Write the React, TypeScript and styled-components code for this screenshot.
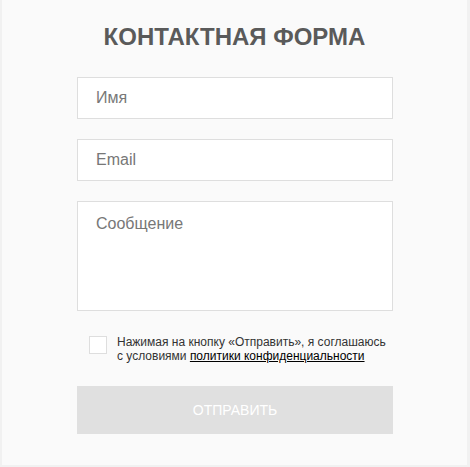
import React from "react";
import styled, { createGlobalStyle } from "styled-components";

const Global = createGlobalStyle`
  html, body { margin: 0; padding: 0; background: #f1f1f1; }
  body { font-family: "Liberation Sans", Arial, sans-serif; }
  * { box-sizing: border-box; }
`;

const Card = styled.div`
  margin: 0 0 0 2px;
  width: 465px;
  height: 465px;
  background: #fafafa;
  display: flex;
  flex-direction: column;
  align-items: center;
  padding-top: 22px;
`;

const Title = styled.h1`
  margin: 0;
  font-family: "Liberation Sans", Arial, sans-serif;
  font-weight: 700;
  font-size: 24px;
  line-height: 30px;
  color: #5a5a5a;
  letter-spacing: 0;
`;

const Form = styled.form`
  width: 316px;
  margin-top: 25px;
  margin-left: 1px;
  display: flex;
  flex-direction: column;
  gap: 20px;
`;

const Field = styled.input`
  height: 42px;
  width: 100%;
  border: 1px solid #dedede;
  background: #fff;
  padding: 0 18px;
  font-family: "Liberation Sans", Arial, sans-serif;
  font-size: 16px;
  color: #333;
  outline: none;
  &::placeholder { color: #777; }
`;

const Area = styled.textarea`
  height: 110px;
  width: 100%;
  border: 1px solid #dedede;
  background: #fff;
  padding: 12px 18px;
  font-family: "Liberation Sans", Arial, sans-serif;
  font-size: 16px;
  line-height: 20px;
  color: #333;
  resize: none;
  outline: none;
  display: block;
  &::placeholder { color: #777; }
`;

const Consent = styled.label`
  display: flex;
  align-items: flex-start;
  gap: 10px;
  padding-left: 12px;
  margin-top: 4px;
`;

const Box = styled.span`
  flex: none;
  width: 18px;
  height: 18px;
  margin-top: 1px;
  border: 1px solid #dedede;
  background: #fff;
`;

const ConsentText = styled.span`
  font-family: "Liberation Sans", Arial, sans-serif;
  font-size: 12px;
  line-height: 14px;
  color: #333;
`;

const Link = styled.a`
  color: #000;
  text-decoration: underline;
`;

const Submit = styled.button`
  height: 48px;
  width: 100%;
  margin-top: 3px;
  border: none;
  background: #e0e0e0;
  color: #fff;
  font-family: "Liberation Sans", Arial, sans-serif;
  font-size: 14px;
  text-transform: uppercase;
`;

export default function App() {
  return (
    <>
      <Global />
      <Card>
        <Title>КОНТАКТНАЯ ФОРМА</Title>
        <Form onSubmit={(e) => e.preventDefault()}>
          <Field placeholder="Имя" />
          <Field placeholder="Email" />
          <Area placeholder="Сообщение" />
          <Consent>
            <Box />
            <ConsentText>
              Нажимая на кнопку «Отправить», я соглашаюсь
              <br />с условиями <Link href="#">политики конфиденциальности</Link>
            </ConsentText>
          </Consent>
          <Submit type="submit">Отправить</Submit>
        </Form>
      </Card>
    </>
  );
}
